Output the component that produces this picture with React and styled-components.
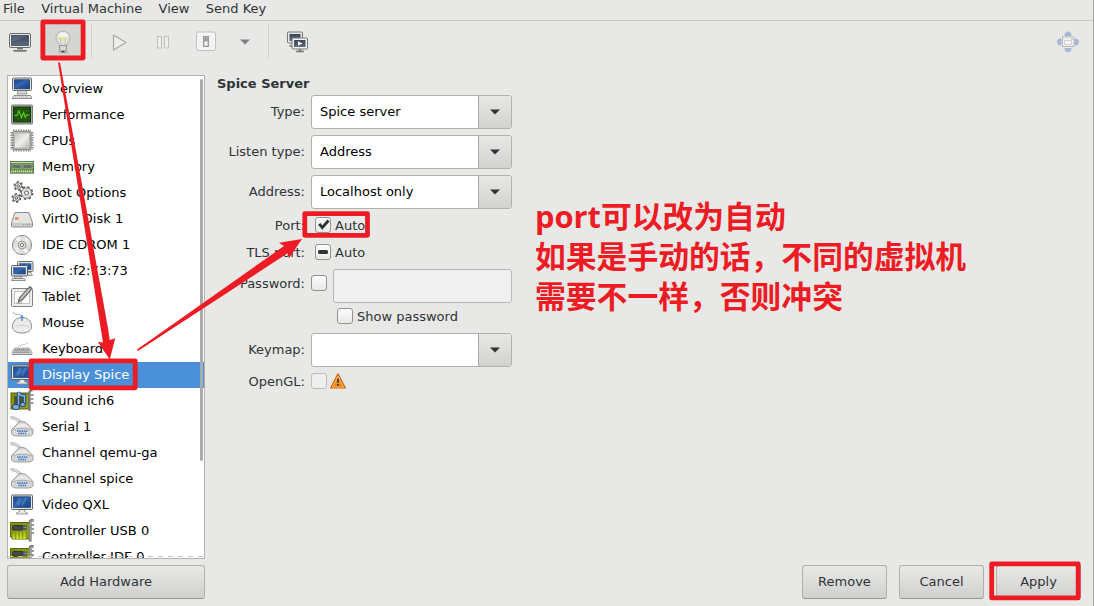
import React from "react";
import styled, { createGlobalStyle, css } from "styled-components";

const GlobalStyle = createGlobalStyle`
  * { box-sizing: border-box; }
  body { margin: 0; background: #e8e8e6; overflow: hidden; }
`;

const Window = styled.div`
  position: relative;
  width: 1094px;
  height: 606px;
  display: flex;
  flex-direction: column;
  background: #e8e8e6;
  border-right: 1px solid #a3a3a0;
  color: #2e3436;
  font: 13px/16px "DejaVu Sans", sans-serif;
  overflow: hidden;
  white-space: nowrap;
`;

const MenuBar = styled.nav`
  height: 21px;
  flex: none;
  display: flex;
  gap: 16.4px;
  padding: 1px 0 0 3px;
  border-bottom: 1px solid #c9c9c5;
`;
const MenuItem = styled.span`
  height: 16px;
`;

const Toolbar = styled.div`
  height: 42px;
  flex: none;
  display: flex;
  align-items: center;
`;
const ToolButton = styled.button`
  width: ${(p) => p.$w}px;
  height: 36px;
  padding: 0;
  border: 0;
  display: flex;
  align-items: center;
  justify-content: center;
  background: ${(p) => (p.$pressed ? "#d5d5d2" : "transparent")};
`;
const ToolSeparator = styled.i`
  width: 1px;
  height: 34px;
  margin: 0 6px;
  background: #cfcfcc;
`;
const Spacer = styled.div`
  flex: 1;
`;

const Body = styled.main`
  flex: none;
  height: 484px;
  margin: 12px 0 0 7px;
  display: flex;
`;
const DeviceList = styled.div`
  position: relative;
  width: 198px;
  height: 484px;
  flex: none;
  background: #fff;
  border: 1px solid #b2b2ae;
  overflow: hidden;
`;
const DeviceRow = styled.div`
  height: 26px;
  display: flex;
  align-items: center;
  gap: 8px;
  padding-left: 2px;
  color: #000;
  ${(p) =>
    p.$selected &&
    css`
      background: #4a90d9;
      color: #fff;
    `}
  svg { flex: none; }
`;
const Scrollbar = styled.i`
  position: absolute;
  top: 3px;
  right: 1px;
  width: 3px;
  height: 382px;
  border-radius: 2px;
  background: #a9aaa9;
`;
const Undershoot = styled.i`
  position: absolute;
  left: 0;
  right: 0;
  bottom: 1px;
  height: 1px;
  background: repeating-linear-gradient(90deg, #c4c4c4 0 5px, transparent 5px 10px);
`;

const Details = styled.section`
  padding: 1px 0 0 12px;
  width: 330px;
`;
const Title = styled.h1`
  margin: 0 0 3px;
  height: 16px;
  font: bold 13px/16px "DejaVu Sans", sans-serif;
`;
const Field = styled.div`
  display: flex;
  align-items: ${(p) => (p.$top ? "flex-start" : "center")};
  height: ${(p) => p.$h || 34}px;
  margin-top: ${(p) => p.$mt ?? 6}px;
  ${(p) =>
    p.$top &&
    css`
      > label { margin-top: 7px; }
      > span { margin-top: 6px; }
    `}
`;
const Label = styled.label`
  width: 88px;
  margin-right: 6px;
  padding-top: ${(p) => (p.$low ? 2 : 0)}px;
  text-align: right;
`;
const Inset = styled.div`
  display: flex;
  align-items: center;
  gap: ${(p) => p.$gap ?? 4}px;
  padding-left: ${(p) => p.$left || 0}px;
`;
const CheckText = styled.span`
  padding-top: 2px;
  margin-bottom: 0;
  line-height: 16px;
`;
const Combo = styled.div`
  width: 201px;
  height: 34px;
  display: flex;
  border: 1px solid #b0b0ac;
  border-radius: 3px;
  background: #fff;
  color: #000;
  overflow: hidden;
`;
const ComboText = styled.span`
  flex: 1;
  padding: 8px;
`;
const ComboButton = styled.span`
  width: 33px;
  display: flex;
  align-items: center;
  justify-content: center;
  border-left: 1px solid #a9a9a5;
  background: linear-gradient(#e7e7e5, #d2d2d0);
`;
const Entry = styled.div`
  width: 179px;
  height: 34px;
  margin-left: 6px;
  border: 1px solid #b7b7b4;
  border-radius: 3px;
  background: #f0f0f0;
`;
const CheckBox = styled.span`
  width: 16px;
  height: 16px;
  flex: none;
  display: flex;
  align-items: center;
  justify-content: center;
  border: 1px solid ${(p) => (p.$disabled ? "#bdbdba" : "#92928e")};
  border-radius: 3px;
  background: ${(p) => (p.$disabled ? "#efefef" : "linear-gradient(#fcfcfc, #e9e9e8)")};
`;

const Footer = styled.footer`
  display: flex;
  gap: 12px;
  padding: 6px 12px 0 7px;
`;
const Button = styled.button`
  width: ${(p) => p.$w || 85}px;
  height: 34px;
  padding: 0 0 1px;
  border: 1px solid #b0b0ad;
  border-bottom-color: #979793;
  border-radius: 3px;
  background: linear-gradient(#e8e8e6, #d0d0ce);
  color: #2e3436;
  font: inherit;
`;

const Markup = styled.svg`
  position: absolute;
  left: 0;
  top: 0;
  pointer-events: none;
`;
const Note = styled.p`
  position: absolute;
  left: 535px;
  top: 196px;
  margin: 0;
  color: #ed1c24;
  font: bold 30.8px/40px "Open Sans", "Noto Sans CJK SC", sans-serif;
`;
const Defs = styled.svg`
  position: absolute;
`;

const Svg = ({ w = 24, h = w, children }) => (
  <svg width={w} height={h} viewBox={`0 0 ${w} ${h}`}>
    {children}
  </svg>
);

const Caret = ({ color = "#2e3436" }) => (
  <Svg w={10} h={6}>
    <path d="M0 .5h10L5 5.500z" fill={color} />
  </Svg>
);

const Gradients = () => (
  <Defs width="0" height="0">
    <defs>
      <linearGradient id="screen" x1="0" y1="0" x2="1" y2="1">
        <stop offset="0" stopColor="#1c4a92" />
        <stop offset=".5" stopColor="#3469b2" />
        <stop offset=".55" stopColor="#2759a3" />
        <stop offset="1" stopColor="#1b4488" />
      </linearGradient>
      <linearGradient id="slate" x1="0" y1="0" x2="0" y2="1">
        <stop offset="0" stopColor="#3b4759" />
        <stop offset="1" stopColor="#5d6b80" />
      </linearGradient>
      <linearGradient id="metal" x1="0" y1="0" x2="1" y2="1">
        <stop offset="0" stopColor="#c4c4c2" />
        <stop offset=".5" stopColor="#efefee" />
        <stop offset="1" stopColor="#bdbdbb" />
      </linearGradient>
      <linearGradient id="warn" x1="0" y1="0" x2="0" y2="1">
        <stop offset="0" stopColor="#fcb45a" />
        <stop offset="1" stopColor="#f57900" />
      </linearGradient>
      <linearGradient id="pcb" x1="0" y1="0" x2="1" y2="1">
        <stop offset="0" stopColor="#7f8c10" />
        <stop offset="1" stopColor="#93a51a" />
      </linearGradient>
    </defs>
  </Defs>
);

const OverviewIcon = () => (
  <Svg>
    <path d="M8 13.500h8l1 3.500H7z" fill="#d6d6d2" stroke="#888a85" strokeWidth=".8" />
    <rect x="2.500" y="1" width="19" height="12.500" rx="1" fill="#deded9" stroke="#6b6d69" />
    <rect x="4.500" y="2.800" width="15" height="9" fill="url(#screen)" stroke="#173e78" strokeWidth=".8" />
    <path d="M4 18.500h16.500l1.500 3H2z" fill="#e4e4e0" stroke="#858783" strokeWidth=".9" />
    <path d="M5 20h14" stroke="#a5a6a3" strokeDasharray="1 1" />
  </Svg>
);
const PerformanceIcon = () => (
  <Svg>
    <rect x="1.500" y="2" width="21" height="19" rx="1" fill="#a9aba6" stroke="#7a7c78" />
    <rect x="3.500" y="4" width="17" height="15" fill="#1d4f10" stroke="#143a0a" />
    <path d="M4 8h16M4 11.500h16M4 15h16M8 4.500v14M12 4.500v14M16 4.500v14" stroke="#2d6b16" strokeWidth=".6" />
    <path d="M4.500 12.500H7L9 8l2.500 6.500 2.200-5 1.500 5 1.500-2.500h3" fill="none" stroke="#62cf1c" strokeWidth="1.100" />
  </Svg>
);
const CpuIcon = () => (
  <Svg>
    <g stroke="#8a8c88" strokeWidth="2.800" strokeDasharray="1.500 1">
      <path d="M3 1.900h18M3 21.100h18M1.900 3v18M22.100 3v18" />
    </g>
    <rect x="3" y="2.500" width="18" height="18" rx="1" fill="#b6b6b3" stroke="#8c8e8a" />
    <rect x="5" y="4.500" width="14" height="14" fill="url(#metal)" />
  </Svg>
);
const MemoryIcon = () => (
  <Svg>
    <rect x="0.500" y="6.500" width="23" height="11.500" fill="#5f9a46" stroke="#5f7c51" />
    <path d="M1 7.500h22" stroke="#c4d8b8" />
    <path d="M2 9.500h9v4H2zM13 9.500h9v4h-9z" fill="#6b6d68" stroke="#a0a39b" strokeWidth=".7" />
    <path d="M1 16.500h22" stroke="#d9dfae" strokeWidth="2" strokeDasharray="1.200 .8" />
    <path d="M0 18.300h24" stroke="#83917a" />
  </Svg>
);
const Gear = ({ x, y, r, teeth = 8 }) => {
  const step = (r * Math.PI) / teeth;
  return (
    <g transform={`translate(${x} ${y})`} fill="none">
      <circle r={r} stroke="#5c5e5a" strokeWidth="2.800" strokeDasharray={`${step} ${step}`} />
      <circle r={r - 0.3} fill="#e2e2e0" stroke="#70726e" strokeWidth=".9" />
      <circle r={r * 0.36} fill="#fff" stroke="#5c5e5a" strokeWidth="1" />
    </g>
  );
};
const GearsIcon = () => (
  <Svg>
    <Gear x={8.3} y={5} r={3.500} teeth={6} />
    <Gear x={6.300} y={17} r={3.500} teeth={6} />
    <Gear x={16.500} y={12} r={5.500} />
  </Svg>
);
const DiskIcon = () => (
  <Svg>
    <path d="M5 5.500h14l3.500 10v3.500q0 1-1 1h-19q-1 0-1-1v-3.500z" fill="#dededb" stroke="#8c8e8a" />
    <path d="M6 6.500h12l3 9H3z" fill="#e4e4e2" />
    <path d="M2 16h20v3H2z" fill="#c9c9c6" />
    <path d="M13 17.500h7" stroke="#999" strokeDasharray="1 1" />
    <rect x="5" y="10.500" width="3.500" height="2" fill="#e8792a" />
  </Svg>
);
const DiscIcon = () => (
  <Svg>
    <circle cx="12" cy="12" r="9.600" fill="url(#metal)" stroke="#8b8d89" />
    <path d="M12 12 5 5.500 9 3zM12 12l7 6.500-4 2.500z" fill="#fff" opacity=".75" />
    <circle cx="12" cy="12" r="4" fill="#dcdcda" stroke="#999b97" />
    <circle cx="12" cy="12" r="1.600" fill="#fff" stroke="#777975" />
  </Svg>
);
const NicIcon = () => (
  <Svg>
    <path d="M14 13.500h7l1.500 3H15z" fill="#d7d7d3" stroke="#888a85" strokeWidth=".8" />
    <rect x="7.500" y="2.500" width="15.500" height="10" rx="1" fill="#e4e4df" stroke="#6b6d69" />
    <rect x="9.300" y="4.300" width="12" height="6.500" fill="url(#screen)" />
    <path d="M5 17h6l1 2.500H4z" fill="#d7d7d3" stroke="#777" strokeWidth=".7" />
    <rect x="1.500" y="6.500" width="16" height="10.500" rx="1" fill="#e4e4df" stroke="#5f615d" />
    <rect x="3.300" y="8.300" width="12.500" height="7" fill="url(#screen)" />
    <path d="M2.500 19.500h12l1 2h-14z" fill="#e8e8e4" stroke="#777" strokeWidth=".8" />
  </Svg>
);
const TabletIcon = () => (
  <Svg>
    <rect x="1.500" y="3.500" width="21" height="18" rx="1" fill="#ededeb" stroke="#80827e" />
    <rect x="4.500" y="6.500" width="15" height="12" fill="#fff" stroke="#c4c5c2" />
    <path d="M8 17.500 9.500 12.500 18.500 2.500q1.500-1.500 2.500-.5t0 3L12.500 15z" fill="#999b97" stroke="#555753" strokeWidth=".9" />
    <path d="m11 13.500 8.500-9.500" stroke="#d5d5d2" strokeWidth="1.100" />
    <path d="M6.500 18q3 1.200 6-.5" fill="none" stroke="#999" strokeWidth=".8" />
  </Svg>
);
const MouseIcon = () => (
  <Svg>
    <path d="M3 1q1 3 5 2.500t4 3" fill="none" stroke="#a8aaa6" />
    <path d="M2.500 15.500c0-5.500 4-9 9.500-9s9.500 3.500 9.500 9c0 4.500-4 6.500-9.500 6.500S2.500 20 2.500 15.500z" fill="#ececea" stroke="#8d8f8b" />
    <path d="M5 15.500q7-3 14 0" fill="none" stroke="#cfd0cd" />
    <path d="M12 4v6M10.300 6.500h3.400" stroke="#5d91d5" strokeWidth="1.500" />
  </Svg>
);
const KeyboardIcon = () => (
  <Svg>
    <path d="M8 10.500q0-2.500 4-2.500t6-3" fill="none" stroke="#c7c8c5" />
    <path d="M4.500 11h15l2.500 4v2.500H2V15z" fill="#d9d9d6" stroke="#a0a29e" strokeWidth=".8" />
    <path d="M5 12.300h14M4.200 13.800h15.600M3.500 15.300h17" stroke="#777975" strokeWidth="1" strokeDasharray="1.500 .5" />
    <path d="M2 17.500h20" stroke="#8a8c88" />
  </Svg>
);
const DisplayIcon = () => (
  <Svg>
    <path d="M9.500 16h5v2.500l3 1.500v1h-11v-1l3-1.500z" fill="#e8e8e4" stroke="#888a85" strokeWidth=".8" />
    <rect x="1.500" y="2" width="21" height="14.500" rx="1" fill="#e8e8e4" stroke="#5f615d" />
    <rect x="3.500" y="3.800" width="17" height="10.700" fill="url(#screen)" stroke="#153c76" strokeWidth=".7" />
    <path d="m8 5-2 6 3 2 3-8zM14 5l-3 8h2l4-8z" fill="#7aa6dd" opacity=".3" />
  </Svg>
);
const SoundIcon = () => (
  <Svg>
    <rect x="1" y="4" width="18" height="16" fill="url(#pcb)" stroke="#5a650a" />
    <path d="M4 7h11v9H4z" fill="#4b5a28" />
    <path d="M19.500 22V3q0-1.500 2-1.500h1" fill="none" stroke="#7a7c78" strokeWidth="2.200" />
    <path d="M20.500 6h3M20.500 10h3M20.500 14h3" stroke="#777975" strokeWidth="1.700" />
    <path d="M8.500 16.500V3q1 4.500 6 3.500v9" fill="none" stroke="#1c437f" strokeWidth="3.200" />
    <path d="M8.500 16.500V3q1 4.500 6 3.500v9" fill="none" stroke="#8fb5e6" strokeWidth="1.400" />
    <ellipse cx="6" cy="18" rx="3.500" ry="2.700" fill="#7fa9e0" stroke="#1c437f" />
    <ellipse cx="12.800" cy="15.500" rx="2.600" ry="2.100" fill="#7fa9e0" stroke="#1c437f" />
  </Svg>
);
const SerialIcon = () => (
  <Svg>
    <path d="M.5 2.500q7 .5 11.500 6" fill="none" stroke="#b4b5b2" strokeWidth="3.200" />
    <path d="M.5 2.500q7 .5 11.500 6" fill="none" stroke="#dadad8" strokeWidth="1.400" />
    <path d="M9 7q4-1.500 7 .5l7 7v4.500q-1.500 2-4.500 2H6.500q-4 0-5-2v-4.500z" fill="#d6d6d4" stroke="#a0a19e" />
    <path d="M10 8.500 4 13.500q8-2.500 16.500 0l-5-4.500z" fill="#eaeae9" />
    <path d="M2 15q10-3.500 20.500 0" fill="none" stroke="#b0b1ae" />
    <path d="M5.500 14.800h13.500l-1.500 4.800h-10.500z" fill="#f4f4f3" stroke="#b5b6b3" strokeWidth=".5" />
    <path d="M7 16.200h10.500M8 18.300h8.500" stroke="#4b7fc8" strokeWidth="1.700" strokeDasharray="1.700 .5" />
  </Svg>
);
const ControllerIcon = () => (
  <Svg>
    <path d="M.5 3.500h19v16.500H2v-2H.5z" fill="url(#pcb)" stroke="#5b680a" />
    <path d="m2.500 20 1.200-6 1.300 6zM6 20l1.300-7 1.300 7zM9.500 20l1.300-7 1.300 7zM13 20l1.300-7 1.300 7z" fill="#c9e228" stroke="#b5cf20" strokeWidth=".5" />
    <rect x="2.500" y="6.500" width="10.500" height="4.500" rx="1" fill="#454844" stroke="#2d2f2c" />
    <path d="M13 7.500h4M13 10h4" stroke="#4e5d55" strokeWidth="2" />
    <path d="M13.500 8.500h3" stroke="#6297d8" strokeWidth="1" />
    <path d="M20.200 22.500V3q0-1.500 1.800-1.500h1.500" fill="none" stroke="#6c6e6a" strokeWidth="2.800" />
    <path d="M20.200 21.500V3q0-1 1.800-1h1" fill="none" stroke="#bebfbc" strokeWidth="1" />
    <path d="M21.500 6h2.500M21.500 10h2.500M21.500 14h2.500" stroke="#777975" strokeWidth="1.700" />
  </Svg>
);

const ConsoleIcon = () => (
  <Svg>
    <path d="M9 17h6v2.500H9z" fill="#777975" />
    <rect x="1.500" y="3.500" width="21" height="14" rx="1.500" fill="#ededeb" stroke="#6a6c68" />
    <rect x="3.500" y="5.300" width="17" height="10.200" fill="url(#slate)" stroke="#323e4e" strokeWidth=".7" />
    <path d="M4 5.800h16L4 12z" fill="#8793a4" opacity=".3" />
    <path d="M6 20.800h12" stroke="#777975" strokeWidth="1.800" strokeLinecap="round" />
  </Svg>
);
const BulbIcon = () => (
  <Svg>
    <ellipse cx="12" cy="22" rx="5.500" ry="1.500" fill="#aaa" opacity=".6" />
    <path d="M12 1.300c4.500 0 7 3 7 6.300 0 3.500-3 4.600-3.500 8.400h-7C8 12.200 5 11.100 5 7.600 5 4.300 7.500 1.300 12 1.300z" fill="#e3e3df" stroke="#b1b2ad" />
    <path d="M8.500 8q1.500 2 3.500 0 2 2 3.500 0" fill="none" stroke="#eee48c" strokeWidth="2.500" />
    <path d="M10.500 15 9 8.500M13.500 15 15 8.500" stroke="#c5c4b5" />
    <ellipse cx="12" cy="5" rx="4.500" ry="2.200" fill="#fff" opacity=".6" />
    <path d="M8.500 15.500h7v5l-2 1.500h-3l-2-1.500z" fill="#c3c4c0" stroke="#8d8f8a" strokeWidth=".8" />
    <path d="M9.500 17h5M9.500 19h5" stroke="#eee" />
    <path d="M10.500 21.500h3" stroke="#40423f" strokeWidth="1.500" />
  </Svg>
);
const PlayIcon = () => (
  <Svg>
    <path d="M5.500 5 18 12.500 5.500 20z" fill="#ededec" stroke="#a7a8a6" strokeWidth="1.200" strokeLinejoin="round" />
  </Svg>
);
const PauseIcon = () => (
  <Svg>
    <path d="M6.500 6.500h4v11.500h-4zM13.500 6.500h4v11.500h-4z" fill="#eeeeed" stroke="#bfbfbd" />
  </Svg>
);
const PowerIcon = () => (
  <Svg>
    <rect x="2.500" y="2" width="19" height="18.500" rx="2" fill="#f1f1f0" stroke="#c0c0be" />
    <rect x="4" y="3.500" width="16" height="15.500" rx="1" fill="none" stroke="#fafafa" />
    <rect x="9.500" y="6.500" width="5" height="10" fill="#b5b5b4" stroke="#9a9a99" />
    <rect x="10.500" y="7.500" width="3" height="4" fill="#9a9a99" />
    <rect x="10.500" y="11.500" width="3" height="4" fill="#f4f4f4" />
  </Svg>
);
const SnapshotsIcon = () => (
  <Svg>
    <rect x="1.500" y="2" width="15" height="11" rx="1" fill="#e9e9e7" stroke="#777975" />
    <rect x="3.500" y="4" width="11" height="7" fill="url(#slate)" />
    <path d="M3.500 16h4" stroke="#8a8c88" strokeWidth="2" />
    <rect x="6" y="8" width="15.500" height="11" rx="1" fill="#f2f2f0" stroke="#777975" />
    <rect x="8" y="10" width="11.500" height="7" fill="url(#slate)" />
    <path d="m12 11.300 4.500 2.200-4.500 2.200z" fill="#fff" />
    <path d="M10 21.500h8M12.500 20h3" stroke="#777975" strokeWidth="1.500" />
  </Svg>
);
const ResizeIcon = () => (
  <Svg>
    <g fill="#a7bbdb" stroke="#7f9bc6" strokeWidth=".9" strokeDasharray="1 .8">
      <path d="M9 5.500q0-3.500 3-3.500t3 3.500zM9 18.500q0 3.300 3 3.300t3-3.300zM5 9q-3.500 0-3.500 3T5 15zM19 9q3.500 0 3.500 3T19 15z" />
    </g>
    <rect x="6.500" y="7" width="11.500" height="9.500" fill="#f1f1f0" stroke="#b7b8b5" />
    <rect x="8.500" y="10.500" width="7" height="4" fill="#fafafa" stroke="#cfcfcd" />
    <path d="M15 9h2" stroke="#aaa" />
  </Svg>
);
const CheckMark = () => (
  <Svg w={14}>
    <path d="M3.200 5.800 6.300 9.600 12.500 2.500" fill="none" stroke="#2e3436" strokeWidth="2.900" />
  </Svg>
);
const MixedMark = () => (
  <Svg w={10} h={4}>
    <rect width="10" height="4" rx="1.500" fill="#2e3436" />
  </Svg>
);
const WarningIcon = () => (
  <Svg w={16}>
    <path d="M8 .9 15.300 15H.7z" fill="url(#warn)" stroke="#ce5c00" strokeWidth="1.200" strokeLinejoin="round" />
    <path d="M8 3 13.800 14.200H2.200z" fill="none" stroke="#fcc27c" strokeWidth=".8" />
    <path d="M8 5.500v4.300M8 11v1.800" stroke="#2e3436" strokeWidth="1.700" />
  </Svg>
);

const devices = [
  ["Overview", OverviewIcon],
  ["Performance", PerformanceIcon],
  ["CPUs", CpuIcon],
  ["Memory", MemoryIcon],
  ["Boot Options", GearsIcon],
  ["VirtIO Disk 1", DiskIcon],
  ["IDE CDROM 1", DiscIcon],
  ["NIC :f2:73:73", NicIcon],
  ["Tablet", TabletIcon],
  ["Mouse", MouseIcon],
  ["Keyboard", KeyboardIcon],
  ["Display Spice", DisplayIcon],
  ["Sound ich6", SoundIcon],
  ["Serial 1", SerialIcon],
  ["Channel qemu-ga", SerialIcon],
  ["Channel spice", SerialIcon],
  ["Video QXL", DisplayIcon],
  ["Controller USB 0", ControllerIcon],
  ["Controller IDE 0", ControllerIcon],
];

const Select = ({ value }) => (
  <Combo>
    <ComboText>{value}</ComboText>
    <ComboButton>
      <Caret />
    </ComboButton>
  </Combo>
);

const Annotations = () => (
  <>
    <Markup width="1094" height="606">
      <g fill="none" stroke="#ed1c24" strokeWidth="4.800" strokeLinejoin="round">
        <rect x="42.900" y="21.800" width="40.200" height="36.200" />
        <rect x="31.200" y="360.800" width="104" height="27" />
        <rect x="304.800" y="213.600" width="62.700" height="21.700" />
        <rect x="991.700" y="563.900" width="86.500" height="34" />
      </g>
      <g fill="#ed1c24">
        <path d="M58 62.500h2L108.300 330l1.400 10 5.500-1.800-5.400 21.300-12-17.500 5.200.4z" />
        <path d="M137 349.500 284 246l-5-3.300 23-3.700-13 19.300-1.500-5L138 351z" />
      </g>
    </Markup>
    <Note>
      port可以改为自动
      <br />
      如果是手动的话，不同的虚拟机
      <br />
      需要不一样，否则冲突
    </Note>
  </>
);

export default function App() {
  return (
    <Window>
      <GlobalStyle />
      <Gradients />
      <MenuBar>
        <MenuItem>File</MenuItem>
        <MenuItem>Virtual Machine</MenuItem>
        <MenuItem>View</MenuItem>
        <MenuItem>Send Key</MenuItem>
      </MenuBar>
      <Toolbar>
        <ToolButton $w={40}><ConsoleIcon /></ToolButton>
        <ToolButton $w={45} $pressed><BulbIcon /></ToolButton>
        <ToolSeparator />
        <ToolButton $w={43}><PlayIcon /></ToolButton>
        <ToolButton $w={43}><PauseIcon /></ToolButton>
        <ToolButton $w={43}><PowerIcon /></ToolButton>
        <ToolButton $w={35}><Caret color="#7f8182" /></ToolButton>
        <ToolSeparator />
        <ToolButton $w={45}><SnapshotsIcon /></ToolButton>
        <Spacer />
        <ToolButton $w={50}><ResizeIcon /></ToolButton>
      </Toolbar>
      <Body>
        <DeviceList>
          {devices.map(([name, Icon]) => (
            <DeviceRow key={name} $selected={name === "Display Spice"}>
              <Icon />
              {name}
            </DeviceRow>
          ))}
          <Scrollbar />
          <Undershoot />
        </DeviceList>
        <Details>
          <Title>Spice Server</Title>
          <Field $mt={0}><Label>Type:</Label><Select value="Spice server" /></Field>
          <Field><Label>Listen type:</Label><Select value="Address" /></Field>
          <Field><Label>Address:</Label><Select value="Localhost only" /></Field>
          <Field $h={20}>
            <Label $low>Port:</Label>
            <Inset $left={4}><CheckBox><CheckMark /></CheckBox><CheckText>Auto</CheckText></Inset>
          </Field>
          <Field $h={20} $mt={7}>
            <Label $low>TLS port:</Label>
            <Inset $left={4}><CheckBox><MixedMark /></CheckBox><CheckText>Auto</CheckText></Inset>
          </Field>
          <Field $mt={7} $top>
            <Label>Password:</Label>
            <CheckBox />
            <Entry />
          </Field>
          <Field $h={20} $mt={3}>
            <Label />
            <Inset $left={26}><CheckBox /><CheckText>Show password</CheckText></Inset>
          </Field>
          <Field $mt={7}><Label>Keymap:</Label><Select value="" /></Field>
          <Field $h={20} $mt={4}>
            <Label $low>OpenGL:</Label>
            <Inset $gap={3}><CheckBox $disabled /><WarningIcon /></Inset>
          </Field>
        </Details>
      </Body>
      <Footer>
        <Button $w={198}>Add Hardware</Button>
        <Spacer />
        <Button>Remove</Button>
        <Button>Cancel</Button>
        <Button>Apply</Button>
      </Footer>
      <Annotations />
    </Window>
  );
}
